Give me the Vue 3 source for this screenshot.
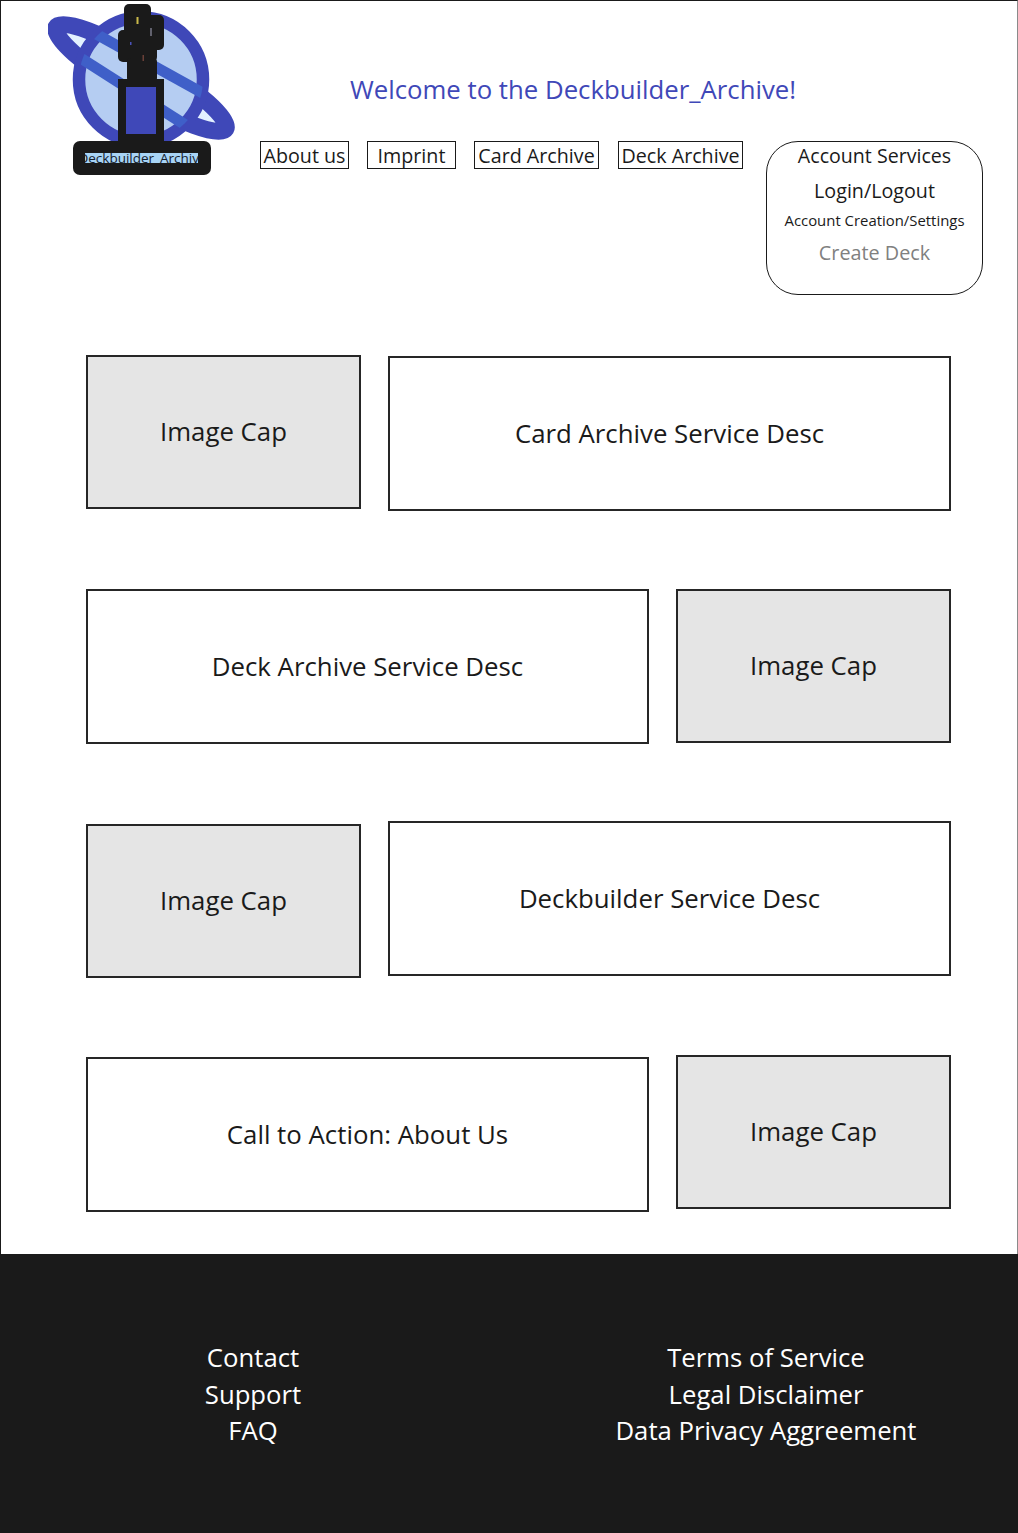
<script setup>
const navItems = [
  { label: 'About us', cls: 'n1' },
  { label: 'Imprint', cls: 'n2' },
  { label: 'Card Archive', cls: 'n3' },
  { label: 'Deck Archive', cls: 'n4' }
]
const rows = [
  { cls: 'r1', cards: [{ t: 'Image Cap', k: 'img', top: 0 }, { t: 'Card Archive Service Desc', k: 'desc', top: 1 }] },
  { cls: 'r2', cards: [{ t: 'Deck Archive Service Desc', k: 'desc', top: 0 }, { t: 'Image Cap', k: 'img', top: 0 }] },
  { cls: 'r3', cards: [{ t: 'Image Cap', k: 'img', top: 3 }, { t: 'Deckbuilder Service Desc', k: 'desc', top: 0 }] },
  { cls: 'r4', cards: [{ t: 'Call to Action: About Us', k: 'desc', top: 2 }, { t: 'Image Cap', k: 'img', top: 0 }] }
]
</script>

<template>
  <div class="page">
    <main class="main">
      <header class="header">
        <svg class="logo" viewBox="0 0 190 180" width="190" height="180">
          <defs>
            <clipPath id="planetClip"><circle cx="93" cy="79.500" r="62" /></clipPath>
            <clipPath id="labelClip"><rect x="37" y="153" width="113" height="10" /></clipPath>
          </defs>
          <ellipse cx="93" cy="78" rx="99" ry="19" transform="rotate(31 93 78)" fill="#e3f1ff" stroke="#3f48b8" stroke-width="17" />
          <circle cx="93" cy="79.500" r="62" fill="#b5cdf2" stroke="#3f48b8" stroke-width="12.500" />
          <g clip-path="url(#planetClip)" stroke="#3f5fc8" stroke-width="11">
            <line x1="30" y1="24" x2="160" y2="96" />
            <line x1="20" y1="50" x2="150" y2="133" />
          </g>
          <rect x="76" y="4" width="27" height="32" rx="5" fill="#1a1a1a" />
          <rect x="84" y="15" width="32" height="35" rx="5" fill="#1a1a1a" />
          <rect x="70" y="30" width="39" height="32" rx="5" fill="#1a1a1a" />
          <rect x="79" y="58" width="30" height="24" rx="4" fill="#1a1a1a" />
          <rect x="88.500" y="17" width="2" height="7" fill="#c9b94a" />
          <rect x="102.500" y="28" width="1" height="8" fill="#a8a8c0" />
          <rect x="82" y="42" width="1.500" height="3" fill="#4a52b8" />
          <rect x="94.500" y="55" width="1.500" height="6" fill="#6a4038" />
          <rect x="70" y="79" width="46" height="64" fill="#1a1a1a" />
          <rect x="78" y="87" width="30" height="47" fill="#3f48b8" />
          <rect x="25" y="141" width="138" height="34" rx="7" fill="#1a1a1a" />
          <rect x="37" y="153" width="113" height="10" fill="#a8d4f5" />
          <g clip-path="url(#labelClip)">
            <text x="94.500" y="162.500" text-anchor="middle" class="logo-text">Deckbuilder_Archive</text>
          </g>
        </svg>
        <div class="head-mid">
          <h1 class="title">Welcome to the Deckbuilder_Archive!</h1>
          <nav class="nav">
            <a v-for="n in navItems" :key="n.label" class="nav-item" :class="n.cls">{{ n.label }}</a>
          </nav>
        </div>
        <aside class="account">
          <div class="ac-a">Account Services</div>
          <div class="ac-b">Login/Logout</div>
          <div class="ac-c">Account Creation/Settings</div>
          <div class="ac-d">Create Deck</div>
        </aside>
      </header>
      <section class="rows">
        <div v-for="r in rows" :key="r.cls" class="row" :class="r.cls">
          <div
            v-for="c in r.cards"
            :key="c.t"
            class="card"
            :class="[c.k, 'top' + c.top]"
          >{{ c.t }}</div>
        </div>
      </section>
    </main>
    <footer class="footer">
      <ul class="links">
        <li>Contact</li>
        <li>Support</li>
        <li>FAQ</li>
      </ul>
      <ul class="links">
        <li>Terms of Service</li>
        <li>Legal Disclaimer</li>
        <li>Data Privacy Aggreement</li>
      </ul>
    </footer>
  </div>
</template>

<style>
html, body { margin: 0; background: #fff; }
</style>

<style scoped>
.page {
  width: 1018px;
  height: 1533px;
  display: flex;
  flex-direction: column;
  font-family: "Open Sans", "Noto Sans", sans-serif;
  color: #1a1a1a;
  overflow: hidden;
}
.main {
  box-sizing: border-box;
  height: 1254px;
  flex: none;
  border: 1px solid #1a1a1a;
  border-bottom: none;
  border-right-color: #8a8a8a;
  display: flex;
  flex-direction: column;
}
.header {
  height: 354px;
  flex: none;
  display: flex;
  align-items: flex-start;
}
.logo { flex: none; margin-left: 47px; margin-top: -1px; display: block; }
.logo-text { font-family: "Open Sans", sans-serif; font-size: 13.500px; fill: #14202c; }
.head-mid { width: 488px; margin-left: 22px; flex: none; }
.title {
  margin: 70px 0 0;
  width: 626px;
  text-align: center;
  font-size: 25.750px;
  line-height: 36px;
  font-weight: 400;
  color: #3f48b8;
}
.nav { display: flex; margin-top: 34px; height: 28px; }
.nav-item {
  box-sizing: border-box;
  height: 28px;
  border: 1px solid #1a1a1a;
  font-size: 19.700px;
  line-height: 27px;
  text-align: center;
  white-space: nowrap;
  flex: none;
}
.n1 { width: 89px; margin-left: 0; }
.n2 { width: 89px; margin-left: 18px; }
.n3 { width: 125px; margin-left: 18px; }
.n4 { width: 125px; margin-left: 19px; }
.account {
  box-sizing: border-box;
  width: 217px;
  height: 154px;
  margin: 140px 0 0 18px;
  border: 1px solid #1a1a1a;
  border-radius: 32px;
  text-align: center;
  flex: none;
}
.ac-a { font-size: 19.600px; line-height: 27px; }
.ac-b { font-size: 19.700px; line-height: 30px; margin-top: 7px; }
.ac-c { font-size: 14.900px; line-height: 22px; margin-top: 3px; }
.ac-d { font-size: 19.800px; line-height: 28px; margin-top: 8px; color: #808080; }
.rows { display: flex; flex-direction: column; padding-left: 85px; flex: none; }
.row { display: flex; gap: 27px; align-items: flex-start; height: 234px; flex: none; }
.r2 { height: 232px; }
.r4 { height: 198px; }
.card {
  box-sizing: border-box;
  display: flex;
  align-items: center;
  justify-content: center;
  border: 2px solid #262626;
  font-size: 25.800px;
  padding-bottom: 2px;
  flex: none;
}
.img { width: 275px; height: 154px; background: #e5e5e5; }
.desc { width: 563px; height: 155px; background: #fff; }
.top1 { margin-top: 1px; }
.top2 { margin-top: 2px; }
.top3 { margin-top: 3px; }
.footer {
  flex: 1;
  background: #1a1a1a;
  color: #fff;
  display: flex;
}
.links {
  list-style: none;
  margin: 86px 0 0;
  padding: 0;
  text-align: center;
  font-size: 25.700px;
  line-height: 36.500px;
  flex: none;
}
.links:first-child { width: 506px; }
.links:last-child { width: 520px; }
</style>
